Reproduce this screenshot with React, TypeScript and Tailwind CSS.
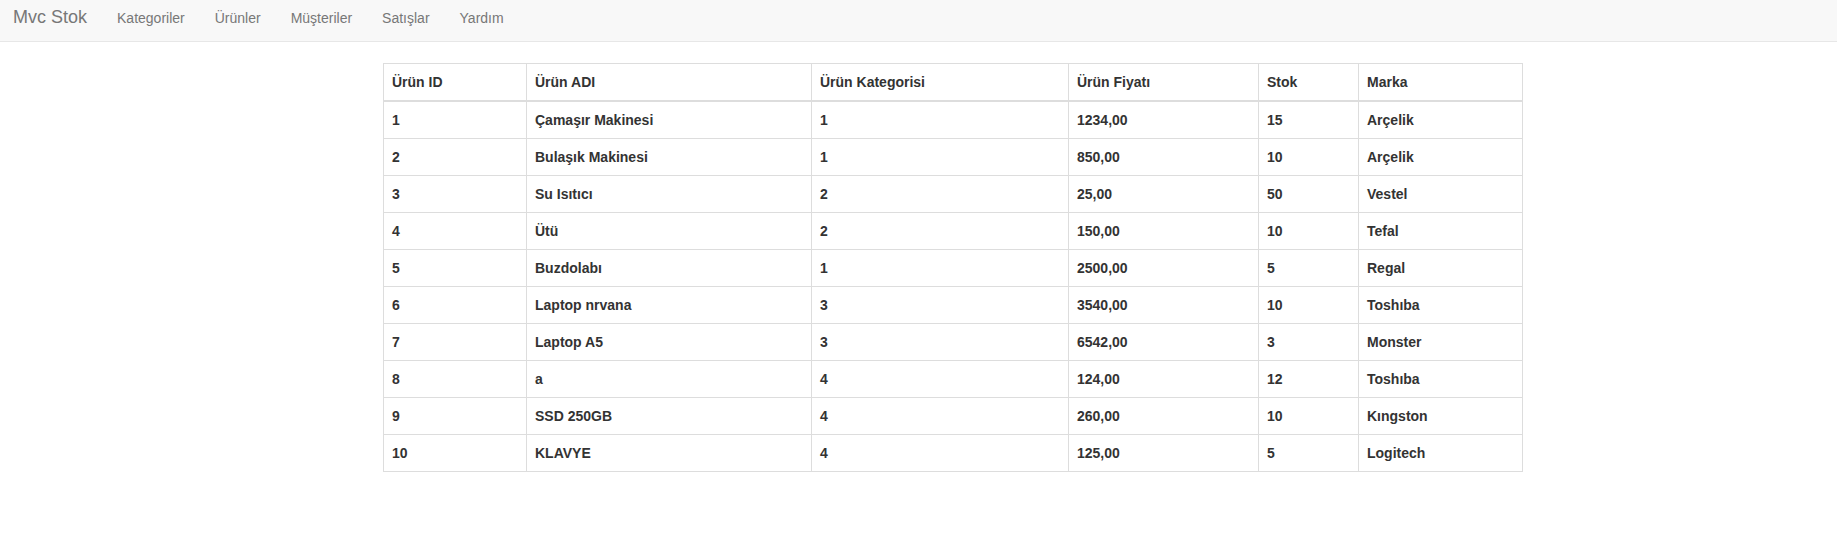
import React from "react";

const rows: [string, string, string, string, string, string][] = [
  ["1", "Çamaşır Makinesi", "1", "1234,00", "15", "Arçelik"],
  ["2", "Bulaşık Makinesi", "1", "850,00", "10", "Arçelik"],
  ["3", "Su Isıtıcı", "2", "25,00", "50", "Vestel"],
  ["4", "Ütü", "2", "150,00", "10", "Tefal"],
  ["5", "Buzdolabı", "1", "2500,00", "5", "Regal"],
  ["6", "Laptop nrvana", "3", "3540,00", "10", "Toshıba"],
  ["7", "Laptop A5", "3", "6542,00", "3", "Monster"],
  ["8", "a", "4", "124,00", "12", "Toshıba"],
  ["9", "SSD 250GB", "4", "260,00", "10", "Kıngston"],
  ["10", "KLAVYE", "4", "125,00", "5", "Logitech"],
];

const headers = ["Ürün ID", "Ürün ADI", "Ürün Kategorisi", "Ürün Fiyatı", "Stok", "Marka"];
const widths = ["w-[143px]", "w-[285px]", "w-[257px]", "w-[190px]", "w-[100px]", "w-[164px]"];

export default function App() {
  return (
    <div className="min-h-[551px] bg-white text-[#333] font-['Liberation_Sans',Arial,sans-serif]">
      <nav className="h-[42px] bg-[#f8f8f8] border-b border-[#e7e7e7] flex items-start">
        <a className="pl-[13px] pr-[15px] pt-[7px] text-[18px] leading-[20px] text-[#777]">Mvc Stok</a>
        {["Kategoriler", "Ürünler", "Müşteriler", "Satışlar", "Yardım"].map((n) => (
          <a key={n} className="px-[15px] pt-[8px] text-[14px] leading-[20px] text-[#777]">
            {n}
          </a>
        ))}
      </nav>
      <div className="pt-[21px] pl-[383px]">
        <table className="w-[1139px] border-collapse border border-[#ddd] text-[14px] leading-[20px] font-bold table-fixed">
          <thead>
            <tr>
              {headers.map((h, i) => (
                <th
                  key={h}
                  className={`${widths[i]} text-left align-bottom p-[8px] border border-[#ddd] border-b-2`}
                >
                  {h}
                </th>
              ))}
            </tr>
          </thead>
          <tbody>
            {rows.map((r) => (
              <tr key={r[0]}>
                {r.map((c, i) => (
                  <td key={i} className="p-[8px] border border-[#ddd] align-top">
                    {c}
                  </td>
                ))}
              </tr>
            ))}
          </tbody>
        </table>
      </div>
    </div>
  );
}
